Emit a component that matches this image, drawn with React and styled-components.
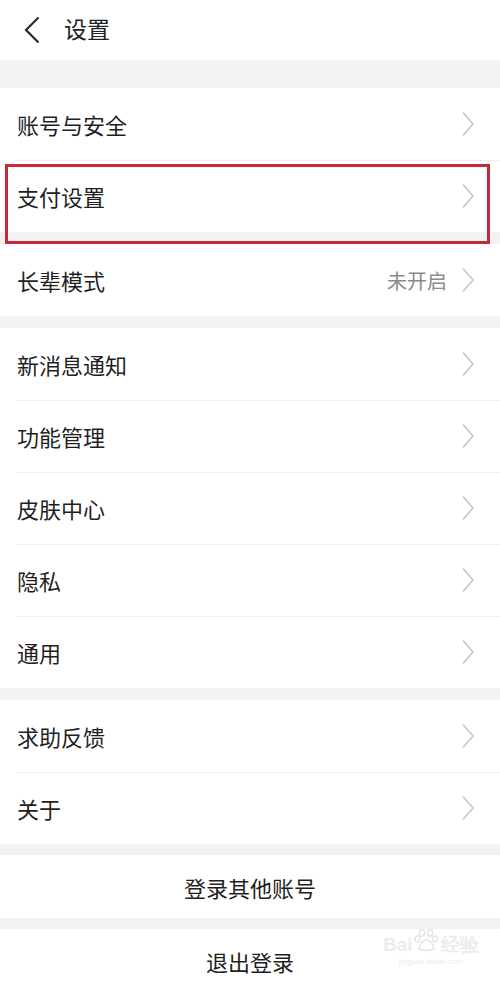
import React from 'react';
import styled, { createGlobalStyle } from 'styled-components';

const GlobalStyle = createGlobalStyle`
  html, body {
    margin: 0;
    padding: 0;
    background: #f2f2f2;
    font-family: 'Noto Sans CJK SC', 'Noto Sans', sans-serif;
  }
`;

const Page = styled.div`
  width: 500px;
  height: 981px;
  overflow: hidden;
  position: relative;
  background: #f2f2f2;
`;

const Header = styled.div`
  height: 60px;
  background: #fff;
  display: flex;
  align-items: center;
  padding-left: 23px;
  margin-bottom: 28px;
`;

const Title = styled.h1`
  margin: 0 0 4px 23px;
  font-size: 23px;
  font-weight: 400;
  color: #222;
`;

const Section = styled.div`
  background: #fff;
  margin-bottom: ${({ gap }) => gap ?? 12}px;
`;

const Row = styled.div`
  position: relative;
  height: 72px;
  display: flex;
  align-items: center;
  padding: 0 25px 0 17px;

  & + &::before {
    content: '';
    position: absolute;
    top: 0;
    left: 16px;
    right: 0;
    height: 1px;
    background: #efefef;
  }
`;

const Label = styled.span`
  flex: 1;
  font-size: 22px;
  color: #1f1f1f;
  padding-bottom: 1px;
`;

const Value = styled.span`
  font-size: 20px;
  color: #8a8a8a;
  margin-right: 14px;
`;

const Highlight = styled.div`
  position: absolute;
  top: 4px;
  left: 5px;
  right: 10px;
  height: 80px;
  border: 3px solid #c42a3c;
  box-sizing: border-box;
  pointer-events: none;
  z-index: 2;
`;

const Action = styled.div`
  height: ${({ h }) => h}px;
  background: #fff;
  display: flex;
  align-items: center;
  justify-content: center;
  font-size: 22px;
  color: #1f1f1f;
  margin-bottom: 11px;
`;

const Watermark = styled.div`
  position: absolute;
  left: 383px;
  top: 928px;
  display: flex;
  flex-direction: column;
  align-items: center;
  color: #ececec;
  font-family: 'Liberation Sans', sans-serif;
  pointer-events: none;
`;

const MarkTop = styled.div`
  display: flex;
  align-items: flex-end;
  font-size: 19px;
  font-weight: 700;
  line-height: 1;
  gap: 1px;
`;

const MarkSmall = styled.div`
  font-size: 8px;
  margin-top: 3px;
`;

const Chevron = () => (
  <svg width="14" height="26" viewBox="0 0 14 26">
    <path d="M2 1.5 L12 13 L2 24.5" fill="none" stroke="#c6c6c6" strokeWidth="1.6" />
  </svg>
);

const Back = () => (
  <svg width="18" height="28" viewBox="0 0 18 28">
    <path d="M15.5 1.5 L3 14 L15.5 26.5" fill="none" stroke="#2a2a2a" strokeWidth="2.2" />
  </svg>
);

const Item = ({ label, value, children }) => (
  <Row>
    {children}
    <Label>{label}</Label>
    {value && <Value>{value}</Value>}
    <Chevron />
  </Row>
);

const Paw = () => (
  <svg width="26" height="26" viewBox="0 0 26 26">
    <g fill="none" stroke="#e4e4e4" strokeWidth="1.4">
      <ellipse cx="8" cy="5" rx="2.6" ry="3.2" />
      <ellipse cx="16" cy="5" rx="2.6" ry="3.2" />
      <ellipse cx="3.5" cy="11" rx="2.4" ry="3" />
      <ellipse cx="21" cy="11" rx="2.4" ry="3" />
      <path d="M5 21 Q6 13 12.5 12 Q19 13 20 21 Q12.5 24 5 21 Z" />
    </g>
  </svg>
);

const App = () => (
  <Page>
    <GlobalStyle />
    <Header>
      <Back />
      <Title>设置</Title>
    </Header>

    <Section>
      <Item label="账号与安全" />
      <Item label="支付设置">
        <Highlight />
      </Item>
    </Section>

    <Section>
      <Item label="长辈模式" value="未开启" />
    </Section>

    <Section>
      <Item label="新消息通知" />
      <Item label="功能管理" />
      <Item label="皮肤中心" />
      <Item label="隐私" />
      <Item label="通用" />
    </Section>

    <Section gap={11}>
      <Item label="求助反馈" />
      <Item label="关于" />
    </Section>

    <Action h={63}>登录其他账号</Action>
    <Action h={64}>退出登录</Action>

    <Watermark>
      <MarkTop>
        <span>Bai</span>
        <Paw />
        <span>经验</span>
      </MarkTop>
      <MarkSmall>jingyan.baidu.com</MarkSmall>
    </Watermark>
  </Page>
);

export default App;
